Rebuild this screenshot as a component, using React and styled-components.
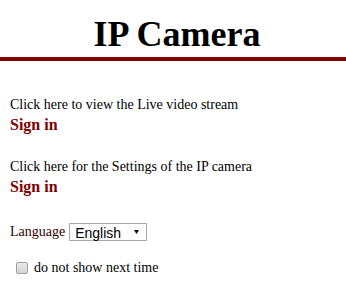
import React from 'react'
import styled, { createGlobalStyle } from 'styled-components'

const GlobalStyle = createGlobalStyle`
  html, body {
    margin: 0;
    padding: 0;
    background: #fff;
  }
  body {
    font-family: "Liberation Serif", "Times New Roman", serif;
    color: #000;
  }
`

const Header = styled.header`
  padding-top: 14px;
`

const Title = styled.h1`
  margin: 0;
  padding-left: 8px;
  text-align: center;
  font-size: 36px;
  line-height: 41px;
  font-weight: 700;
`

const Bar = styled.div`
  margin-top: 2px;
  height: 4px;
  background-color: #800000;
`

const Main = styled.main`
  padding: 34px 10px 0 10px;
  display: flex;
  flex-direction: column;
`

const Block = styled.div`
  display: flex;
  flex-direction: column;
  margin-bottom: ${props => props.gap || 0}px;
`

const Line = styled.div`
  font-size: 14px;
  line-height: 20px;
`

const SignIn = styled.a`
  font-size: 16px;
  line-height: 20px;
  font-weight: 700;
  color: #800000;
  text-decoration: none;
  cursor: pointer;
`

const Row = styled.div`
  display: flex;
  align-items: center;
  height: 20px;
  font-size: 14px;
  line-height: 20px;
  margin-bottom: ${props => props.gap || 0}px;
`

const Label = styled.span`
  color: #330000;
  margin-right: 4px;
`

const SelectWrap = styled.div`
  position: relative;
  width: 78px;
  height: 18px;
  box-sizing: border-box;
  border: 1px solid #a9a9a9;
  background: #fff;
`

const Select = styled.select`
  appearance: none;
  -webkit-appearance: none;
  border: 0;
  outline: none;
  background: transparent;
  width: 100%;
  height: 100%;
  margin: 0;
  padding: 0 0 0 5px;
  font-family: "Liberation Sans", Arial, sans-serif;
  font-size: 14px;
  line-height: 16px;
  color: #000;
`

const Arrow = styled.svg`
  position: absolute;
  right: 7px;
  top: 6px;
  pointer-events: none;
`

const CheckRow = styled.label`
  display: flex;
  align-items: center;
  font-size: 14px;
  line-height: 20px;
  padding-left: 6px;
`

const Check = styled.input`
  appearance: none;
  -webkit-appearance: none;
  width: 12px;
  height: 12px;
  margin: 0 6px 0 0;
  box-sizing: border-box;
  border: 1px solid #a0a0a0;
  border-radius: 2px;
  background: linear-gradient(#e8e8e8, #d6d6d6);
`

const App = () => {
  return (
    <>
      <GlobalStyle />
      <Header>
        <Title>IP Camera</Title>
        <Bar />
      </Header>
      <Main>
        <Block gap={22}>
          <Line>Click here to view the Live video stream</Line>
          <SignIn>Sign in</SignIn>
        </Block>
        <Block gap={25}>
          <Line>Click here for the Settings of the IP camera</Line>
          <SignIn>Sign in</SignIn>
        </Block>
        <Row gap={16}>
          <Label>Language</Label>
          <SelectWrap>
            <Select defaultValue="en">
              <option value="en">English</option>
            </Select>
            <Arrow width="5" height="4" viewBox="0 0 5 4">
              <path d="M0 0 H5 L2.5 4 Z" fill="#000" />
            </Arrow>
          </SelectWrap>
        </Row>
        <CheckRow>
          <Check type="checkbox" />
          do not show next time
        </CheckRow>
      </Main>
    </>
  )
}

export default App
